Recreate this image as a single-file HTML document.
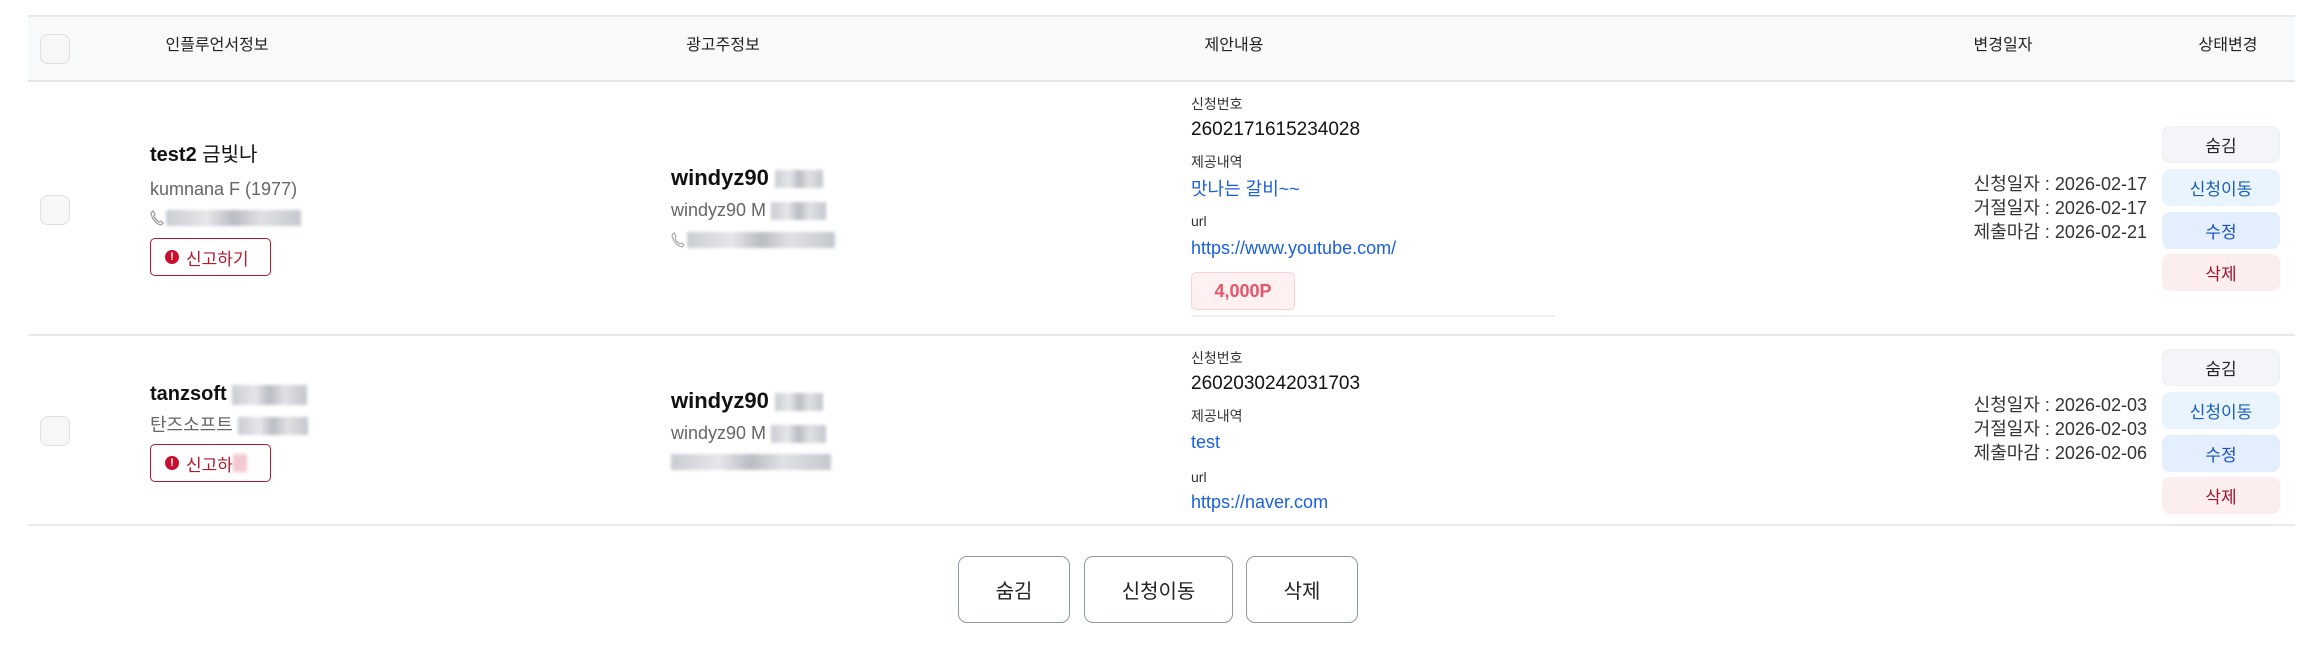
<!DOCTYPE html>
<html><head><meta charset="utf-8"><style>
*{margin:0;padding:0;box-sizing:border-box}
body{width:2317px;height:646px;background:#fff;position:relative;overflow:hidden;font-family:"Liberation Sans","Noto Sans CJK KR",sans-serif;color:#1f2430}
.a{position:absolute;white-space:nowrap;line-height:1}
.hdr{position:absolute;left:28px;top:15px;width:2267px;height:67px;background:#f8f9fa;border-top:2px solid #e6e8eb;border-bottom:2px solid #e3e5e8}
.line{position:absolute;left:28px;width:2267px;height:2px;background:#e6e8eb}
.cb{position:absolute;left:40px;width:30px;height:30px;border:1.5px solid #dcdfe3;border-radius:8px;background:#f7f7f8}
.ht{font-size:16px;color:#222;transform:translateX(-50%)}
.name{font-size:20px;color:#111}
.sub{font-size:18px;color:#666}
.blur{display:inline-block;background:linear-gradient(90deg,#c9ccd2,#e6e7ea 30%,#b9bcc3 50%,#dfe1e4 70%,#c4c7cd);filter:blur(1.5px);vertical-align:middle}
.rep{position:absolute;left:150px;width:121px;height:38px;border:1.5px solid #b3182c;border-radius:5px;color:#b3182c;font-size:17px;display:flex;align-items:center;padding-left:14px}
.rep i{display:inline-block;width:14px;height:14px;border-radius:50%;background:#c8102e;color:#fff;font-style:normal;font-size:11px;font-weight:bold;text-align:center;line-height:14px;margin-right:7px}
.lab{font-size:14px;color:#333}
.num{font-size:19px;color:#111}
.lnk{font-size:18px;color:#1a5fe0}
.dt{font-size:18px;color:#333;text-align:right;right:170px;line-height:24px}
.sb{position:absolute;left:2162px;width:118px;height:37px;border-radius:8px;font-size:17px;display:flex;align-items:center;justify-content:center}
.s1{background:#f3f5f8;color:#222;border:1px solid #eceff3}
.s2{background:#eaf4ff;color:#1a5fb4}
.s3{background:#e3eeff;color:#1a4fc4}
.s4{background:#fdeeee;color:#9c1230}
.bb{position:absolute;top:556px;height:67px;border:1.5px solid #8f97a6;border-radius:9px;font-size:20px;color:#222;display:flex;align-items:center;justify-content:center;background:#fff}
svg.ph{vertical-align:middle;margin-right:2px}
</style></head><body>
<div class="hdr"></div>
<div class="cb" style="top:34px"></div>
<div class="a ht" style="left:217px;top:38px">인플루언서정보</div>
<div class="a ht" style="left:723px;top:38px">광고주정보</div>
<div class="a ht" style="left:1234px;top:38px">제안내용</div>
<div class="a ht" style="left:2003px;top:38px">변경일자</div>
<div class="a ht" style="left:2228px;top:38px">상태변경</div>

<!-- row 1 -->
<div class="cb" style="top:195px"></div>
<div class="a name" style="left:150px;top:145px"><span style="font-weight:600">test2</span> 금빛나</div>
<div class="a sub" style="left:150px;top:180px">kumnana F (1977)</div>
<div class="a" style="left:150px;top:210px"><svg class="ph" width="14" height="16" viewBox="0 0 14 16"><path d="M3 1 L5 4 L4 6 C5 9 7 11 9 12 L11 11 L13 13 L11 15 C6 14 2 9 1 3 Z" fill="none" stroke="#999" stroke-width="1.2"/></svg><span class="blur" style="width:135px;height:16px"></span></div>
<div class="rep" style="top:238px"><i>!</i>신고하기</div>

<div class="a name" style="left:671px;top:167px;font-size:22px;font-weight:600">windyz90 <span class="blur" style="width:48px;height:18px"></span></div>
<div class="a sub" style="left:671px;top:201px">windyz90 M <span class="blur" style="width:55px;height:18px"></span></div>
<div class="a" style="left:671px;top:232px"><svg class="ph" width="14" height="16" viewBox="0 0 14 16"><path d="M3 1 L5 4 L4 6 C5 9 7 11 9 12 L11 11 L13 13 L11 15 C6 14 2 9 1 3 Z" fill="none" stroke="#aaa" stroke-width="1.2"/></svg><span class="blur" style="width:148px;height:16px"></span></div>

<div class="a lab" style="left:1191px;top:97px">신청번호</div>
<div class="a num" style="left:1191px;top:120px">2602171615234028</div>
<div class="a lab" style="left:1191px;top:155px">제공내역</div>
<div class="a lnk" style="left:1191px;top:180px">맛나는 갈비~~</div>
<div class="a lab" style="left:1191px;top:214px">url</div>
<div class="a lnk" style="left:1191px;top:239px">https://www.youtube.com/</div>
<div class="a" style="left:1191px;top:272px;width:104px;height:38px;background:#fff0f1;border:1.5px solid #fbd0d5;border-radius:5px;color:#e5566b;font-weight:bold;font-size:18px;display:flex;align-items:center;justify-content:center">4,000P</div>
<div class="a" style="left:1191px;top:315px;width:364px;height:2px;background:#eef0f2"></div>

<div class="a dt" style="top:172px">신청일자 : 2026-02-17<br>거절일자 : 2026-02-17<br>제출마감 : 2026-02-21</div>
<div class="sb s1" style="top:126px">숨김</div>
<div class="sb s2" style="top:169px">신청이동</div>
<div class="sb s3" style="top:212px">수정</div>
<div class="sb s4" style="top:254px">삭제</div>

<div class="line" style="top:334px"></div>

<!-- row 2 -->
<div class="cb" style="top:416px"></div>
<div class="a name" style="left:150px;top:384px"><span style="font-weight:600">tanzsoft</span> <span class="blur" style="width:75px;height:20px"></span></div>
<div class="a sub" style="left:150px;top:416px">탄즈소프트 <span class="blur" style="width:70px;height:18px"></span></div>
<div class="rep" style="top:444px"><i>!</i>신고하<span class="blur" style="width:14px;height:18px;background:#f2c9cf"></span></div>

<div class="a name" style="left:671px;top:390px;font-size:22px;font-weight:600">windyz90 <span class="blur" style="width:48px;height:18px"></span></div>
<div class="a sub" style="left:671px;top:424px">windyz90 M <span class="blur" style="width:55px;height:18px"></span></div>
<div class="a" style="left:671px;top:454px"><span class="blur" style="width:160px;height:16px"></span></div>

<div class="a lab" style="left:1191px;top:351px">신청번호</div>
<div class="a num" style="left:1191px;top:374px">2602030242031703</div>
<div class="a lab" style="left:1191px;top:409px">제공내역</div>
<div class="a lnk" style="left:1191px;top:433px">test</div>
<div class="a lab" style="left:1191px;top:470px">url</div>
<div class="a lnk" style="left:1191px;top:493px">https://naver.com</div>

<div class="a dt" style="top:393px">신청일자 : 2026-02-03<br>거절일자 : 2026-02-03<br>제출마감 : 2026-02-06</div>
<div class="sb s1" style="top:349px">숨김</div>
<div class="sb s2" style="top:392px">신청이동</div>
<div class="sb s3" style="top:435px">수정</div>
<div class="sb s4" style="top:477px">삭제</div>

<div class="line" style="top:524px"></div>

<div class="bb" style="left:958px;width:112px">숨김</div>
<div class="bb" style="left:1084px;width:149px">신청이동</div>
<div class="bb" style="left:1246px;width:112px">삭제</div>
</body></html>
